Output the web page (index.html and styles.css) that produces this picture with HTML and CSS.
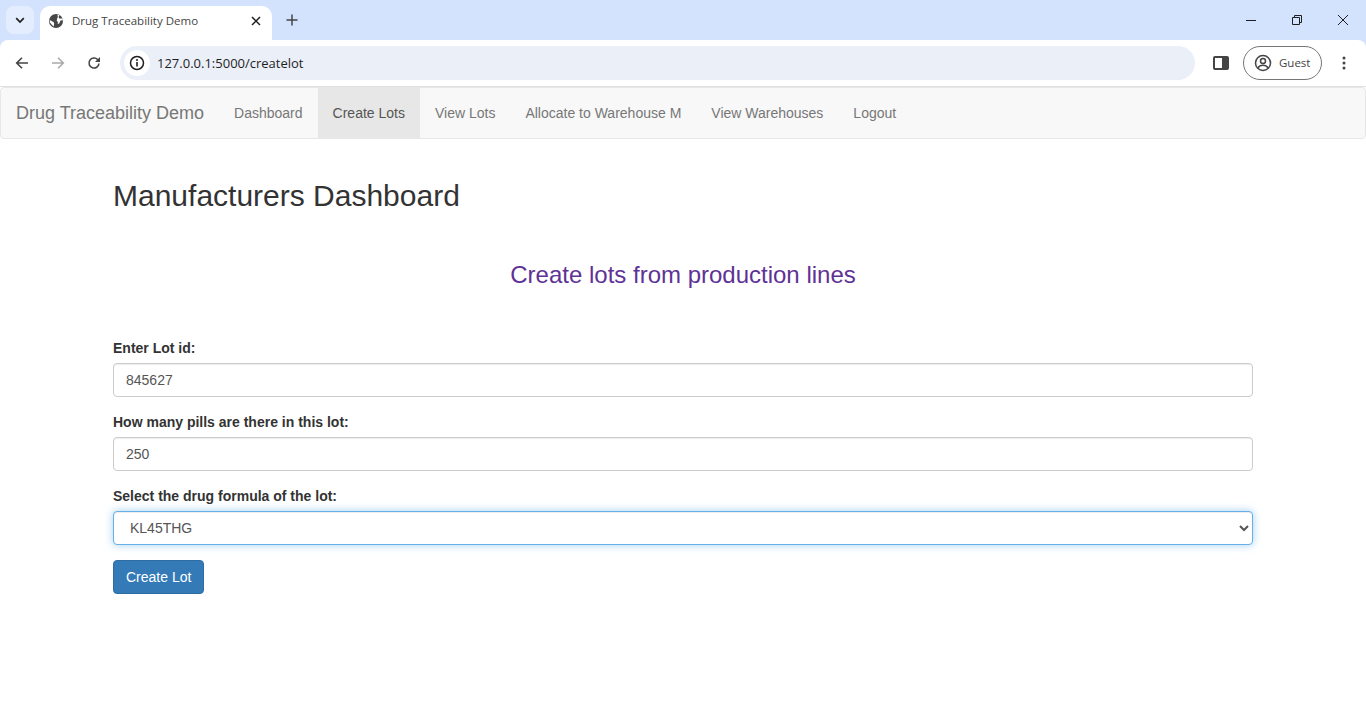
FILE: index.html
```html
<!DOCTYPE html>
<html lang="en">
<head>
<meta charset="utf-8">
<title>Drug Traceability Demo</title>
<link rel="stylesheet" href="styles.css">
</head>
<body>
<div class="browser">
  <div class="tabstrip">
    <button class="tab-search" aria-label="Search tabs">
      <svg width="12" height="12" viewBox="0 0 12 12"><path d="M2.2 4.2 6 8l3.8-3.8" fill="none" stroke="#1f1f1f" stroke-width="1.7"/></svg>
    </button>
    <div class="tab">
      <svg class="favicon" width="16" height="16" viewBox="0 0 16 16"><circle cx="8" cy="8" r="7" fill="#474747"/><path d="M1.600 7 5.500 9l.7 1.500-.5 3-1.700-1.500L2 9.500ZM9.500 1.500l2 .8-1 1.700.8 1.500h3.300l.2 1.700-2.300.3-1.300 3-1.500.5.300-2-1.300-1.300.4-2L9.800 4Z" fill="#fff"/></svg>
      <span class="tab-title">Drug Traceability Demo</span>
      <svg class="tab-close" width="10" height="10" viewBox="0 0 10 10"><path d="M1 1l8 8M9 1 1 9" stroke="#1f1f1f" stroke-width="1.500"/></svg>
    </div>
    <svg class="new-tab" width="12" height="12" viewBox="0 0 12 12"><path d="M6 .5v11M.5 6h11" stroke="#444" stroke-width="1.500"/></svg>
    <div class="window-controls">
      <svg width="10" height="10" viewBox="0 0 10 10"><path d="M0 5.500h10" stroke="#1f1f1f"/></svg>
      <svg width="10" height="10" viewBox="0 0 10 10"><path d="M.5 2.500h7v7h-7zM2.500 2.500v-2h7v7h-2" fill="none" stroke="#1f1f1f"/></svg>
      <svg width="10" height="10" viewBox="0 0 10 10"><path d="M0 0l10 10M10 0 0 10" stroke="#1f1f1f"/></svg>
    </div>
  </div>
  <div class="toolbar">
    <svg class="nav-icon" width="14" height="14" viewBox="0 0 14 14"><path d="M13 7H2M7 1.700 1.700 7 7 12.300" fill="none" stroke="#444" stroke-width="1.600"/></svg>
    <svg class="nav-icon" width="14" height="14" viewBox="0 0 14 14"><path d="M1 7h11M7 1.700 12.300 7 7 12.300" fill="none" stroke="#aaa" stroke-width="1.600"/></svg>
    <svg class="nav-icon" width="14" height="14" viewBox="0 0 14 14"><path d="M12 7.500A5 5 0 1 1 10.600 3.500L12.500 5.300" fill="none" stroke="#444" stroke-width="1.600"/><path d="M13 1v5H8z" fill="#444"/></svg>
    <div class="omnibox">
      <span class="site-info">
        <svg width="16" height="16" viewBox="0 0 16 16"><circle cx="8" cy="8" r="6.500" fill="none" stroke="#1f1f1f" stroke-width="1.500"/><path d="M8 7v4.500" stroke="#1f1f1f" stroke-width="1.600"/><circle cx="8" cy="5" r="1" fill="#1f1f1f"/></svg>
      </span>
      <span class="url">127.0.0.1:5000/createlot</span>
    </div>
    <svg class="side-panel" width="16" height="14" viewBox="0 0 16 14"><rect x="1" y="1" width="14" height="12" rx="1" fill="none" stroke="#444" stroke-width="2"/><rect x="9" y="1" width="6" height="12" fill="#444"/></svg>
    <div class="profile">
      <svg width="18" height="18" viewBox="0 0 18 18"><circle cx="9" cy="9" r="7.500" fill="none" stroke="#444" stroke-width="1.500"/><circle cx="9" cy="7" r="2.500" fill="none" stroke="#444" stroke-width="1.500"/><path d="M3.800 14c1.500-2.400 3.200-2.800 5.200-2.800s3.700.4 5.200 2.800" fill="none" stroke="#444" stroke-width="1.500"/></svg>
      <span>Guest</span>
    </div>
    <svg class="menu" width="4" height="14" viewBox="0 0 4 14"><circle cx="2" cy="2" r="1.500" fill="#444"/><circle cx="2" cy="7" r="1.500" fill="#444"/><circle cx="2" cy="12" r="1.500" fill="#444"/></svg>
  </div>
</div>

<nav class="navbar">
  <a class="brand" href="#">Drug Traceability Demo</a>
  <a class="nav-link" href="#">Dashboard</a>
  <a class="nav-link active" href="#">Create Lots</a>
  <a class="nav-link" href="#">View Lots</a>
  <a class="nav-link" href="#">Allocate to Warehouse M</a>
  <a class="nav-link" href="#">View Warehouses</a>
  <a class="nav-link" href="#">Logout</a>
</nav>

<main class="container">
  <h2 class="page-title">Manufacturers Dashboard</h2>
  <h3 class="subtitle">Create lots from production lines</h3>
  <form>
    <div class="form-group">
      <label for="lot">Enter Lot id:</label>
      <input id="lot" class="form-control" type="text" value="845627">
    </div>
    <div class="form-group">
      <label for="pills">How many pills are there in this lot:</label>
      <input id="pills" class="form-control" type="text" value="250">
    </div>
    <div class="form-group">
      <label for="formula">Select the drug formula of the lot:</label>
      <select id="formula" class="form-control focused"><option>KL45THG</option></select>
    </div>
    <button class="btn" type="button">Create Lot</button>
  </form>
</main>
</body>
</html>
```

FILE: styles.css
```css
* { box-sizing: border-box; }
html, body { margin: 0; padding: 0; }
body {
  background: #fff;
  color: #333;
  font-family: "Liberation Sans", Arial, sans-serif;
  font-size: 14px;
  line-height: 1.42857;
}
a { text-decoration: none; }

.browser { height: 87px; background: #d3e3fd; font-family: "Open Sans", "Noto Sans", sans-serif; }
.tabstrip { height: 40px; display: flex; align-items: flex-end; position: relative; }
.tab-search {
  width: 28px; height: 28px; margin: 0 0 6px 6px; border: 0; padding: 0;
  border-radius: 8px; background: #e4edfd;
  display: flex; align-items: center; justify-content: center;
}
.tab {
  width: 232px; height: 34px; margin-left: 6px; background: #fff;
  border-radius: 10px 10px 0 0;
  display: flex; align-items: center; padding: 0 10px 5px 8px;
}
.favicon { flex: none; }
.tab-title { margin-left: 8px; font-size: 11.500px; line-height: 16px; color: #444; flex: 1; white-space: nowrap; }
.tab-close { flex: none; margin-right: 1px; }
.new-tab { margin: 0 0 14px 14px; }
.window-controls {
  margin-left: auto; align-self: flex-start; margin-top: 15px;
  display: flex; gap: 36px; padding-right: 18px;
}
.window-controls svg { display: block; }

.toolbar {
  height: 47px; background: #fff; border-bottom: 1px solid #dfe1e5;
  border-radius: 8px 8px 0 0;
  display: flex; align-items: center; padding-left: 15px;
}
.nav-icon { margin-right: 22px; flex: none; }
.nav-icon:nth-child(3) { margin-right: 19px; }
.omnibox {
  width: 1075px; height: 34px; border-radius: 17px; background: #ebeff8;
  display: flex; align-items: center; padding-left: 4px;
}
.site-info {
  width: 26px; height: 26px; border-radius: 50%; background: #fff;
  display: flex; align-items: center; justify-content: center;
}
.url { margin-left: 7px; font-size: 13px; color: #1f1f1f; white-space: nowrap; }
.side-panel { margin-left: 18px; flex: none; }
.profile {
  margin-left: 14px; width: 79px; height: 34px; border: 1px solid #747775; border-radius: 17px;
  display: flex; align-items: center; gap: 7px; padding-left: 10px;
  font-size: 11.500px; color: #444;
}
.menu { margin-left: 20px; flex: none; margin-right: 0; }

.navbar {
  height: 52px; background: #f8f8f8; border: 1px solid #e7e7e7; border-radius: 4px;
  display: flex;
}
.brand { padding: 15px; font-size: 18px; line-height: 20px; color: #777; }
.nav-link { padding: 15px; line-height: 20px; color: #777; }
.nav-link.active { background: #e7e7e7; color: #555; }

.container { width: 1170px; margin: 0 auto; padding: 0 15px; }
.page-title { margin: 40px 0 0; font-size: 30px; line-height: 33px; font-weight: 500; color: #333; }
.subtitle { margin: 50px 0 0; font-size: 24px; line-height: 26px; font-weight: 500; color: #5f3295; text-align: center; }
form { margin-top: 50px; }
.form-group { margin-bottom: 15px; }
label { display: block; padding-top: 1px; margin-bottom: 4px; font-weight: 700; }
.form-control {
  display: block; width: 100%; height: 34px; padding: 6px 12px;
  font-family: inherit; font-size: 14px; line-height: 1.42857; color: #555;
  background: #fff; border: 1px solid #ccc; border-radius: 4px;
  box-shadow: inset 0 1px 1px rgba(0,0,0,.075); outline: 0;
}
.form-control.focused {
  border-color: #66afe9;
  box-shadow: inset 0 1px 1px rgba(0,0,0,.075), 0 0 8px rgba(102,175,233,.6);
}
.btn {
  display: inline-block; padding: 6px 12px; height: 34px;
  font-family: inherit; font-size: 14px; line-height: 20px; color: #fff;
  background: #337ab7; border: 1px solid #2e6da4; border-radius: 4px;
}
```
